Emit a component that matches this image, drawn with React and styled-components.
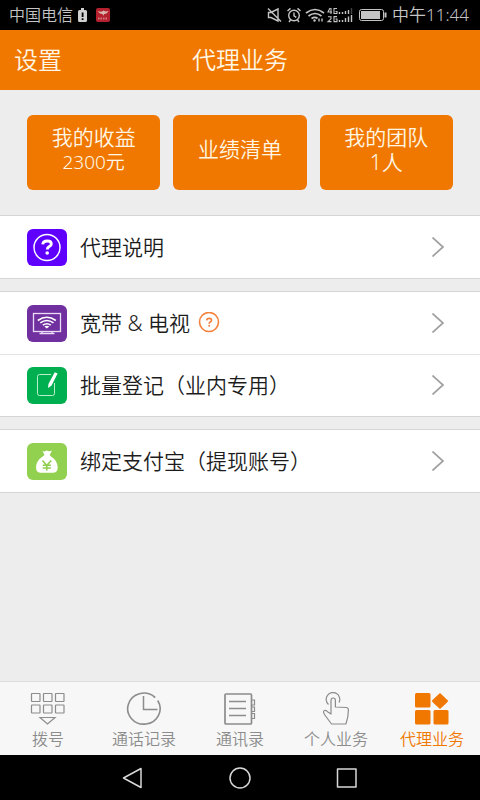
import React from "react";
import styled, { createGlobalStyle } from "styled-components";

const ORANGE = "#f07800";

const GlobalStyle = createGlobalStyle`
  * { box-sizing: border-box; }
  body {
    margin: 0;
    background: #ededed;
    font-family: "Noto Sans", "Noto Sans CJK SC", sans-serif;
    font-weight: 350;
  }
  button {
    font: inherit;
    border: 0;
    padding: 0;
    background: none;
    color: inherit;
    cursor: pointer;
  }
  a { color: inherit; text-decoration: none; }
  svg { display: block; flex: none; }
`;

const Screen = styled.div`
  min-height: 100vh;
  display: flex;
  flex-direction: column;
`;

const StatusBar = styled.div`
  height: 30px;
  padding: 0 11px 0 9px;
  display: flex;
  align-items: center;
  justify-content: space-between;
  background: #000;
  color: #c4c4c4;
`;

const StatusGroup = styled.div`
  display: flex;
  align-items: center;
  gap: ${(p) => p.$gap}px;
`;

const StatusText = styled.span`
  font-size: ${(p) => p.$size}px;
  line-height: 24px;
  white-space: nowrap;
`;

const Header = styled.header`
  height: 60px;
  padding: 0 14px;
  display: grid;
  grid-template-columns: 1fr auto 1fr;
  align-items: center;
  background: ${ORANGE};
  color: #fff6e6;
  font-size: 24px;
  line-height: 36px;
`;

const SettingsButton = styled.button`
  justify-self: start;
`;

const Title = styled.h1`
  margin: 0;
  font: inherit;
`;

const Main = styled.main`
  flex: 1;
  display: flex;
  flex-direction: column;
  gap: 12px;
`;

const Cards = styled.div`
  display: grid;
  grid-template-columns: repeat(3, 1fr);
  gap: 13px;
  padding: 25px 27px 13px;
`;

const Card = styled.button`
  height: 75px;
  padding-bottom: 6px;
  border-radius: 6px;
  background: ${ORANGE};
  color: #fff6e6;
  display: flex;
  flex-direction: column;
  align-items: center;
  justify-content: center;
`;

const CardLine = styled.span`
  font-size: ${(p) => p.$size || 21}px;
  line-height: 25px;
`;

const Group = styled.section`
  background: #fff;
  border-top: 1px solid #d6d6d6;
  border-bottom: 1px solid #d6d6d6;
`;

const Row = styled.button`
  width: 100%;
  height: 62px;
  padding: 0 36px 0 27px;
  display: flex;
  align-items: center;
  text-align: left;
  color: #1c1c1c;

  & + & {
    box-shadow: inset 0 1px #e4e4e4;
  }
`;

const RowIcon = styled.span`
  width: 40px;
  height: 37px;
  border-radius: 6px;
  background: ${(p) => p.$color};
  overflow: hidden;
  flex: none;
`;

const RowLabel = styled.span`
  flex: 1;
  display: flex;
  align-items: center;
  gap: 8px;
  padding-left: 13px;
  font-size: 21px;
  line-height: 30px;
`;

const TabBar = styled.nav`
  height: 74px;
  border-top: 1px solid #dcdcdc;
  background: #f7f7f7;
  display: grid;
  grid-template-columns: repeat(5, 1fr);
`;

const Tab = styled.a`
  display: flex;
  flex-direction: column;
  align-items: center;
  padding-top: 10px;
  color: ${(p) => (p.$active ? ORANGE : "#8c8c8c")};
  font-size: 16px;
  line-height: 24px;
  white-space: nowrap;
`;

const SystemBar = styled.div`
  height: 45px;
  display: flex;
  align-items: center;
  justify-content: center;
  gap: 83px;
  background: #000;
`;

const SystemButton = styled.button`
  width: 24px;
  height: 24px;
`;

const BatteryAlert = () => (
  <svg width="9" height="15" viewBox="0 0 9 15">
    <path d="M3 0h3v2h1.5q1.500 0 1.500 1.500v9q0 1.500-1.500 1.500h-6Q0 14 0 12.500v-9Q0 2 1.500 2H3z" fill="#d0d0d0" />
    <path d="M3.700 4.500h1.800v4.500H3.700zM3.700 10.300h1.800v1.700H3.700z" fill="#000" />
  </svg>
);

const RedBadge = () => (
  <svg width="14" height="14" viewBox="0 0 14 14">
    <rect width="14" height="14" rx="2" fill="#b5202e" />
    <path d="M1.500 3.200l4 .6 2-1.400 2.200 1.200 3-.6-2.200 2.500-2.300.5-.8 1.800-1-1.800-2.400-.4z" fill="#d7b7ae" />
    <path d="M2 10.600h10" stroke="#d07a7e" strokeWidth="2" strokeDasharray="1.500 1" />
  </svg>
);

const StatusIcons = () => (
  <svg width="120" height="18" viewBox="0 0 120 18" fill="none" stroke="#c4c4c4" strokeWidth="1.400">
    <path d="M1.500 6.500h2.500L11 3v12L4 11.500H1.500zM1 2.500l13 13" />
    <circle cx="27" cy="9.500" r="5.300" />
    <path d="M27 6.500v3.300l2.300 1.500M20.500 5l3-2.600M33.500 5l-3-2.600M23.500 14l-1.500 2M30.500 14l1.500 2" />
    <path d="M39 7q9-7 18 0M41.500 10q6.500-5 13 0M44.500 12.500q3.500-2.200 6 0" strokeWidth="1.700" />
    <circle cx="47.500" cy="14.500" r="1.200" fill="#c4c4c4" stroke="none" />
    <path d="M52 15.500v-3M55 12.500v3" />
    <path d="M63 2l-2 4h4M64 2v6M70 2.500h-3v5h3V5.500h-1.500M61 10.800h3v2l-3 2.800h3.500M70 10.600h-3v5h3V13h-1.500" strokeWidth="1.100" />
    <path d="M72.500 6v2M75.500 6v2M78.500 5v3M81.500 4v4M72.500 14v2M75.500 14v2M78.500 12v4M81.500 10.500v5.500M84.500 9v7" strokeWidth="1.400" />
    <path d="M84.500 2v6" stroke="#444" />
    <rect x="92.500" y="3.500" width="24" height="11" rx="2" strokeWidth="1" />
    <path d="M94 5h19v8H94z" fill="#c4c4c4" stroke="none" />
    <path d="M118.500 6.500v5" strokeWidth="2" />
  </svg>
);

const HelpIcon = () => (
  <svg width="40" height="37" viewBox="0 0 40 37" fill="none" stroke="#fff">
    <circle cx="20" cy="18.500" r="13" strokeWidth="1.500" />
    <path d="M15.800 15.300q.2-3.300 4.500-3.300 4 0 4 2.900 0 1.600-2 2.700-2 1.100-2 2.900" strokeWidth="2.900" />
    <circle cx="20.200" cy="24" r="1.800" fill="#fff" stroke="none" />
  </svg>
);

const TvIcon = () => (
  <svg width="40" height="37" viewBox="0 0 40 37" fill="none" stroke="#eadcf7">
    <rect x="6.500" y="8.500" width="27" height="18" strokeWidth="1.300" />
    <path d="M15 26.500v2M25 26.500v2M12.500 28.500h15" strokeWidth="1.300" />
    <path d="M10.800 15.500q9-6.500 18 0M13.300 17.900q6.600-4.700 13.200 0M15.800 20.200q4-2.900 8 0" strokeWidth="1.600" stroke="#fff" />
    <path d="M17.300 21.500q2.500-1.700 5 0l-2.500 2z" fill="#fff" stroke="none" />
  </svg>
);

const NoteIcon = () => (
  <svg width="40" height="37" viewBox="0 0 40 37" fill="none">
    <path d="M24 7.500H12.500q-2 0-2 2v17q0 2 2 2h13q2 0 2-2V16" stroke="#b9f0cd" strokeWidth="1" />
    <path d="M27.700 5.300l2.900 1.200-6.200 12.200-3.400 2.200.5-4z" fill="#fff" />
  </svg>
);

const MoneyIcon = () => (
  <svg width="40" height="37" viewBox="0 0 40 37">
    <path d="M15.500 8q2 1 3-.1 1.300-1 2.600 0 1.200.9 3.900-.4l-2.300 4.400 1 1.300q7 4.500 7 11 0 5.500-5 5.500H14q-5 0-5-5.500 0-6.500 7-11l1.500-1.300z" fill="#fff" />
    <path d="M15.500 17.500l4.300 5 4.300-5M19.800 22v5.500M15.700 22.300h8.200M15.700 25h8.200" stroke="#8fce4e" strokeWidth="1.600" fill="none" />
  </svg>
);

const HintIcon = () => (
  <svg width="22" height="22" viewBox="0 0 22 22" fill="none" stroke="#f5803c">
    <circle cx="11" cy="10" r="9.500" strokeWidth="1.600" />
    <path d="M8.700 8.400q.2-2 2.500-2 2.300 0 2.300 1.800 0 1-1.200 1.700-1.100.7-1.100 1.800" strokeWidth="1.700" />
    <circle cx="11.200" cy="13.800" r="1" fill="#f5803c" stroke="none" />
  </svg>
);

const Chevron = () => (
  <svg width="12" height="20" viewBox="0 0 12 20" fill="none" stroke="#a0a0a0" strokeWidth="1.700">
    <path d="M.5.500L11 10 .5 19.500" />
  </svg>
);

const TabIcon = ({ children }) => (
  <svg width="36" height="35" viewBox="0 0 36 35" fill="none" stroke="currentColor" strokeWidth="1.200">
    {children}
  </svg>
);

const DialIcon = () => (
  <TabIcon>
    {[1.5, 13.5, 25.5].map((x) =>
      [1.5, 13].map((y) => <rect key={x + "-" + y} x={x} y={y} width="8.500" height="8" rx="0.500" />)
    )}
    <path d="M10 25.500h15L17.500 32z" />
  </TabIcon>
);

const HistoryIcon = () => (
  <TabIcon>
    <path d="M28.500 4.900A16.200 15.500 0 1 0 31.700 8.500" strokeWidth="1.600" />
    <path d="M17.500 4v13.500h14" strokeWidth="1.500" />
    <circle cx="28.500" cy="5" r="1" fill="currentColor" stroke="none" />
  </TabIcon>
);

const BookIcon = () => (
  <TabIcon>
    <path d="M29.500 8H32.500v5h-3M29.500 15H32.500v4.500h-3M29.500 21.500H32.500v5h-3" />
    <rect x="3" y="2" width="26.500" height="30" rx="1" strokeWidth="1.700" />
    <path d="M7 9.500h17M7 16.500h17M7 23.500h17" strokeWidth="1.500" />
  </TabIcon>
);

const TouchIcon = () => (
  <TabIcon>
    <path d="M10.500 12.500A6.800 6.800 0 1 1 21 10.500" />
    <path d="M13 21V8.500Q13 6 15.200 6t2.200 2.500V15l11 .5q2 .2 2 2.500 0 7-2.500 14H13.500L6.500 22.500q-2-3.500 0-4 1.500-.3 3 1.200L13 22z" strokeLinejoin="round" />
  </TabIcon>
);

const AgentIcon = () => (
  <TabIcon>
    <g fill="currentColor" stroke="none">
      <rect x="1" y="1" width="15.500" height="14.500" rx="1.500" />
      <rect x="1" y="18" width="15.500" height="14.500" rx="1.500" />
      <rect x="19.500" y="18" width="15" height="14.500" rx="1.500" />
      <path d="M26 1q8 7.500 8.300 8-.4.900-8.300 8-8-7.200-8.300-8Q18 8.300 26 1z" />
    </g>
  </TabIcon>
);

const GROUPS = [
  [{ label: "代理说明", color: "#5f00ff", Icon: HelpIcon }],
  [
    { label: "宽带 & 电视", color: "#7030a0", Icon: TvIcon, hint: true },
    { label: "批量登记（业内专用）", color: "#00b050", Icon: NoteIcon },
  ],
  [{ label: "绑定支付宝（提现账号）", color: "#92d050", Icon: MoneyIcon }],
];

const TABS = [
  { label: "拨号", Icon: DialIcon },
  { label: "通话记录", Icon: HistoryIcon },
  { label: "通讯录", Icon: BookIcon },
  { label: "个人业务", Icon: TouchIcon },
  { label: "代理业务", Icon: AgentIcon, active: true },
];

const SYSTEM = [
  { name: "返回", shape: <path d="M2.500 12L20 2.500v19z" /> },
  { name: "主屏幕", shape: <circle cx="12" cy="12" r="10" /> },
  { name: "最近任务", shape: <rect x="2.500" y="3" width="18.500" height="18" /> },
];

export default function App() {
  return (
    <Screen>
      <GlobalStyle />
      <StatusBar>
        <StatusGroup $gap={5}>
          <StatusText $size={16}>中国电信</StatusText>
          <StatusGroup $gap={9}>
            <BatteryAlert />
            <RedBadge />
          </StatusGroup>
        </StatusGroup>
        <StatusGroup $gap={5}>
          <StatusIcons />
          <StatusText $size={17}>中午11:44</StatusText>
        </StatusGroup>
      </StatusBar>
      <Header>
        <SettingsButton type="button">设置</SettingsButton>
        <Title>代理业务</Title>
      </Header>
      <Main>
        <Cards>
          <Card type="button">
            <CardLine>我的收益</CardLine>
            <CardLine $size={19}>2300元</CardLine>
          </Card>
          <Card type="button">
            <CardLine>业绩清单</CardLine>
          </Card>
          <Card type="button">
            <CardLine>我的团队</CardLine>
            <CardLine>1人</CardLine>
          </Card>
        </Cards>
        {GROUPS.map((rows) => (
          <Group key={rows[0].label}>
            {rows.map(({ label, color, Icon, hint }) => (
              <Row key={label} type="button">
                <RowIcon $color={color}>
                  <Icon />
                </RowIcon>
                <RowLabel>
                  {label}
                  {hint && <HintIcon />}
                </RowLabel>
                <Chevron />
              </Row>
            ))}
          </Group>
        ))}
      </Main>
      <TabBar>
        {TABS.map(({ label, Icon, active }) => (
          <Tab key={label} href="#" $active={active} aria-current={active ? "page" : undefined}>
            <Icon />
            {label}
          </Tab>
        ))}
      </TabBar>
      <SystemBar>
        {SYSTEM.map(({ name, shape }) => (
          <SystemButton key={name} type="button" aria-label={name}>
            <svg width="24" height="24" viewBox="0 0 24 24" fill="none" stroke="#d8d8d8" strokeWidth="1.500" strokeLinejoin="round">
              {shape}
            </svg>
          </SystemButton>
        ))}
      </SystemBar>
    </Screen>
  );
}
